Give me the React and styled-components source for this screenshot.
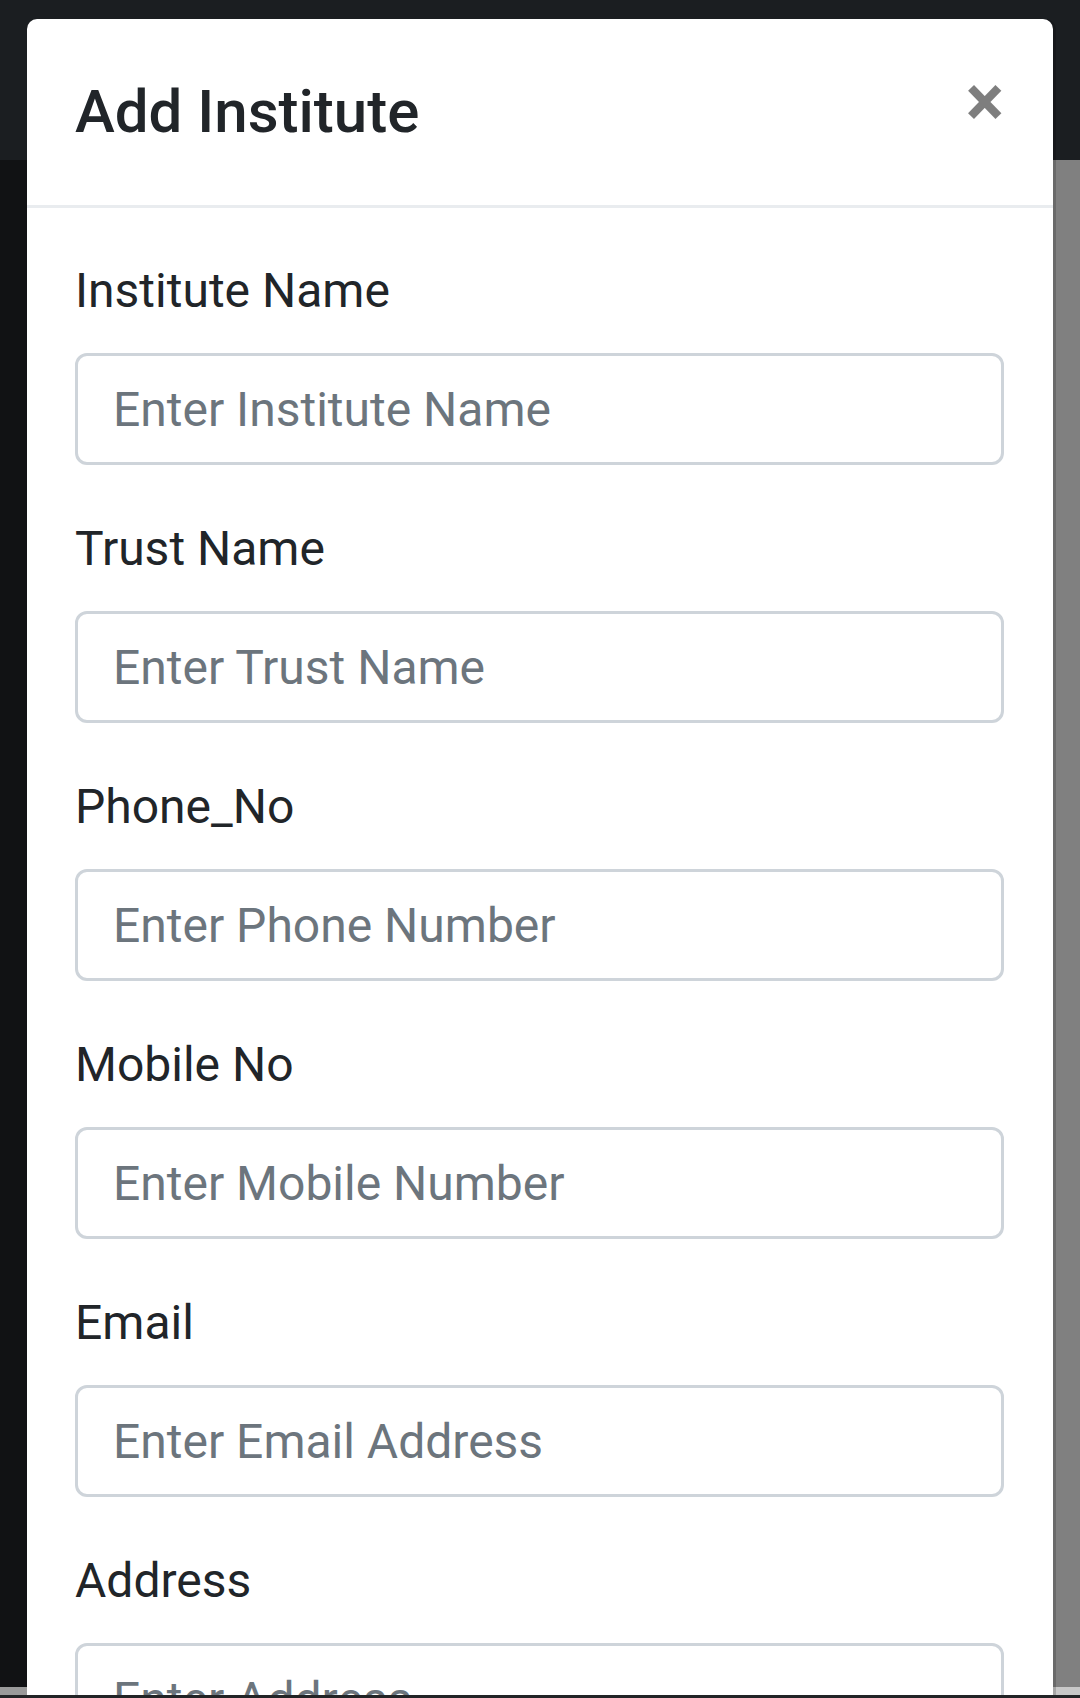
import React from "react";
import styled, { createGlobalStyle } from "styled-components";

const fields = [
  { label: "Institute Name", placeholder: "Enter Institute Name" },
  { label: "Trust Name", placeholder: "Enter Trust Name" },
  { label: "Phone_No", placeholder: "Enter Phone Number" },
  { label: "Mobile No", placeholder: "Enter Mobile Number" },
  { label: "Email", placeholder: "Enter Email Address" },
  { label: "Address", placeholder: "Enter Address" },
];

const App = () => {
  return (
    <Screen>
      <GlobalStyle />
      <Page>
        <Navbar />
        <PageBody>
          <Sidebar />
          <Main />
        </PageBody>
        <Footer>
          <FooterLeft />
          <FooterRight />
        </Footer>
      </Page>

      <Modal>
        <Header>
          <Title>Add Institute</Title>
          <Close type="button" aria-label="Close">
            ×
          </Close>
        </Header>
        <Body>
          {fields.map((f) => (
            <Group key={f.label}>
              <Label>{f.label}</Label>
              <Input type="text" placeholder={f.placeholder} />
            </Group>
          ))}
        </Body>
      </Modal>
      <BottomEdge />
    </Screen>
  );
};

const GlobalStyle = createGlobalStyle`
  * { box-sizing: border-box; }
  body {
    margin: 0;
    font-family: Roboto, "Liberation Sans", sans-serif;
  }
`;

const Screen = styled.div`
  position: relative;
  width: 1080px;
  height: 1698px;
  overflow: hidden;
  background: #111214;
`;

const Page = styled.div`
  height: 100%;
  display: flex;
  flex-direction: column;
`;

const Navbar = styled.div`
  height: 160px;
  background: #1b1e21;
`;

const PageBody = styled.div`
  flex: 1;
  display: flex;
`;

const Sidebar = styled.div`
  width: 240px;
  background: #111214;
`;

const Main = styled.div`
  flex: 1;
  background: #808080;
`;

const Footer = styled.div`
  height: 11px;
  display: flex;
`;

const FooterLeft = styled.div`
  width: 240px;
  background: #9a9a9a;
`;

const FooterRight = styled.div`
  flex: 1;
  background: #c8c8c8;
`;

const BottomEdge = styled.div`
  position: absolute;
  left: 0;
  right: 0;
  bottom: 0;
  height: 3px;
  background: #222426;
  z-index: 2;
`;

const Modal = styled.div`
  position: absolute;
  top: 19px;
  left: 27px;
  right: 27px;
  bottom: -200px;
  background: #fff;
  border-radius: 10px 10px 0 0;
  box-shadow: 3px 0 0 rgba(0, 0, 0, 0.17);
`;

const Header = styled.div`
  display: flex;
  align-items: flex-start;
  justify-content: space-between;
  padding: 57px 49px 57px 48px;
  border-bottom: 3px solid #e9ecef;
`;

const Title = styled.h5`
  margin: 0;
  font-size: 60px;
  font-weight: 500;
  line-height: 1.2;
  color: #212529;
`;

const Close = styled.button`
  margin: -10px 0 0 0;
  padding: 0;
  border: 0;
  background: transparent;
  font-family: Roboto, "Liberation Sans", sans-serif;
  font-size: 72px;
  font-weight: 700;
  line-height: 1;
  color: #000;
  opacity: 0.5;
`;

const Body = styled.div`
  padding: 47px 49px 47px 48px;
`;

const Group = styled.div`
  margin-bottom: 48px;
`;

const Label = styled.label`
  display: block;
  margin-bottom: 26px;
  font-size: 48px;
  line-height: 72px;
  color: #212529;
`;

const Input = styled.input`
  display: block;
  width: 100%;
  height: 112px;
  padding: 0 35px;
  border: 3px solid #ced4da;
  border-radius: 12px;
  font-family: Roboto, "Liberation Sans", sans-serif;
  font-size: 48px;
  color: #495057;
  background: #fff;
  outline: none;

  &::placeholder {
    color: #6c757d;
  }
`;

export default App;
